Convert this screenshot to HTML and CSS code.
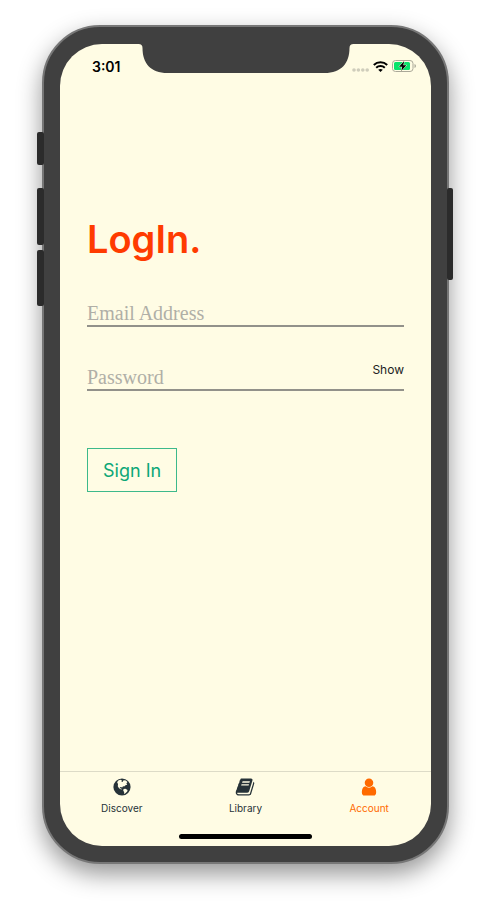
FILE: index.html
```html
<!DOCTYPE html>
<html lang="en">
<head>
<meta charset="utf-8">
<meta name="viewport" content="width=device-width, initial-scale=1">
<title>LogIn</title>
<link rel="stylesheet" href="styles.css">
</head>
<body>
<div class="phone">
  <span class="key key-mute"></span>
  <span class="key key-up"></span>
  <span class="key key-down"></span>
  <span class="key key-power"></span>
  <div class="screen">
    <svg class="notch" viewBox="0 0 219 30" aria-hidden="true"><path d="M0 0H219V1H217Q213 1 213 5C213 20 205 30 188 30H31C14 30 6 20 6 5Q6 1 2 1H0Z"/></svg>
    <header class="status">
      <time>3:01</time>
      <div class="indicators">
        <svg class="signal" viewBox="0 0 17 4" aria-hidden="true"><circle cx="2" cy="2" r="1.800"/><circle cx="6.400" cy="2" r="1.800"/><circle cx="10.800" cy="2" r="1.800"/><circle cx="15.200" cy="2" r="1.800"/></svg>
        <svg class="wifi" viewBox="0 0 15 11" aria-hidden="true"><path d="M.8 4A9.700 9.700 0 0 1 14.200 4M3.200 6.700A6.200 6.200 0 0 1 11.800 6.700"/><path class="fill" d="M7.500 11L5.200 8.800Q7.500 7.200 9.800 8.800Z"/></svg>
        <svg class="battery" viewBox="0 0 24 12" aria-hidden="true"><rect class="case" x=".5" y=".5" width="20.500" height="11" rx="3"/><path class="tip" d="M22.500 4Q24 4.600 24 6T22.500 8Z"/><rect class="charge" x="2" y="2" width="16" height="8" rx="1.500"/><path class="bolt" d="M12.200 1L7 6.700H10.200L9.200 11L14.400 5.300H11.300Z"/></svg>
      </div>
    </header>
    <main>
      <h1>LogIn.</h1>
      <form>
        <div class="field">
          <input type="email" aria-label="Email Address" placeholder="Email Address">
        </div>
        <div class="field">
          <input type="password" aria-label="Password" placeholder="Password">
          <button class="show" type="button">Show</button>
        </div>
        <button class="submit" type="submit">Sign In</button>
      </form>
    </main>
    <nav class="tabs">
      <a href="#discover">
        <svg viewBox="0 0 20 20" aria-hidden="true"><circle cx="10" cy="10" r="8.600"/><path class="land" d="M6.300 3.600L8.200 2.700L10 3.300L9.200 4.300L10.600 4.900L11.600 3.300L13.800 3.400L15.400 5L14.400 6.500L15.200 7.800L13.500 8.200L12.200 9.400L11 9.200L10.200 10.600L8.800 9.900L7.600 10.400L8.800 11.400L10 12L9.200 12.500L7 11.300L5.800 9.200L6 6.900L5.100 5.200ZM11.600 12L13.400 11.700L15.600 13L15.200 14.600L13.400 16.200L12 17L12.200 15.200L11.200 13.600Z"/></svg>
        <span>Discover</span>
      </a>
      <a href="#library">
        <svg viewBox="0 0 1792 1792" aria-hidden="true"><path d="M1703 478q40 57 18 129l-275 906q-19 64-76.500 107.500t-122.500 43.500h-923q-77 0-148.500-53.500t-99.500-131.500q-24-67-2-127 0-4 3-27t4-37q1-8-3-21.500t-3-19.500q2-11 8-21t16.500-23.500 16.500-23.500q23-38 45-91.500t30-91.500q3-10 .5-30t-.5-28q3-11 17-28t17-23q21-36 42-92t25-90q1-9-2.500-32t.5-28q4-13 22-30.500t22-22.500q19-26 42.500-84.500t27.500-96.500q1-8-3-25.500t-2-26.500q2-8 9-18t18-23 17-21q8-12 16.500-30.500t15-35 16-36 19.500-32 26.500-23.500 36-11.500 47.500 5.500l-1 3q38-9 51-9h761q74 0 114 56t18 130l-274 906q-36 119-71.500 153.500t-128.500 34.500h-869q-27 0-38 15-11 16-1 43 24 70 144 70h923q29 0 56-15.500t35-41.500l300-987q7-22 5-57 38 15 59 43zm-1064 2q-4 13 2 22.500t20 9.500h608q13 0 25.500-9.500t16.500-22.500l21-64q4-13-2-22.500t-20-9.500h-608q-13 0-25.500 9.500t-16.500 22.500zm-83 256q-4 13 2 22.500t20 9.500h608q13 0 25.500-9.500t16.500-22.500l21-64q4-13-2-22.500t-20-9.500h-608q-13 0-25.500 9.500t-16.500 22.500z"/></svg>
        <span>Library</span>
      </a>
      <a class="active" href="#account" aria-current="page">
        <svg viewBox="0 0 1792 1792" aria-hidden="true"><path d="M1536 1399q0 109-62.500 187t-150.500 78h-854q-88 0-150.500-78t-62.500-187q0-85 8.500-160.500t31.500-152 58.500-131 94-89 134.500-34.500q131 128 313 128t313-128q76 0 134.500 34.500t94 89 58.500 131 31.500 152 8.500 160.500zm-256-887q0 159-112.500 271.500t-271.500 112.500-271.500-112.500-112.500-271.500 112.500-271.500 271.500-112.500 271.500 112.500 112.500 271.500z"/></svg>
        <span>Account</span>
      </a>
    </nav>
    <div class="home"></div>
  </div>
</div>
</body>
</html>
```
FILE: styles.css
```css
* { box-sizing: border-box; }

body {
  margin: 0;
  min-height: 100vh;
  padding: 25px 42px 42px;
  display: flex;
  background: #fff;
  color: #000;
  font-family: Inter, "Liberation Sans", sans-serif;
}

.phone {
  position: relative;
  flex: 1;
  display: flex;
  padding: 17px 16px 16px;
  border: 2px solid #777;
  border-radius: 58px;
  background: #404040;
  box-shadow: 0 10px 24px rgba(0, 0, 0, .42);
}

.key {
  position: absolute;
  left: -7px;
  width: 7px;
  border-radius: 2px;
  background: #2b2b2b;
}
.key-mute { top: 105px; height: 33px; }
.key-up { top: 161px; height: 57px; }
.key-down { top: 223px; height: 56px; }
.key-power { top: 161px; height: 92px; left: auto; right: -6px; width: 6px; }

.screen {
  position: relative;
  flex: 1;
  display: flex;
  flex-direction: column;
  overflow: hidden;
  border-radius: 42px;
  background: #fffce4;
}

.notch {
  position: absolute;
  top: -1px;
  left: 50%;
  width: 219px;
  height: 30px;
  transform: translateX(-50%);
  fill: #404040;
}

.status {
  display: flex;
  justify-content: space-between;
  align-items: center;
  height: 44px;
  padding: 0 15px 0 32px;
}
.status time { font-size: 14px; font-weight: 600; }
.indicators { display: flex; align-items: center; gap: 4px; }
.signal { width: 17px; height: 4px; margin-top: 7px; fill: #cfcdbb; }
.wifi { width: 15px; height: 11px; fill: none; stroke: #000; stroke-width: 2; }
.wifi .fill { fill: #000; stroke: none; }
.battery { width: 24px; height: 12px; }
.case { fill: none; stroke: #aaa898; }
.tip { fill: #aaa898; }
.charge { fill: #07e36b; }
.bolt { fill: #000; stroke: #fffce4; stroke-width: 1; paint-order: stroke; }

main { flex: 1; padding: 127px 27px 40px; }

h1 {
  margin: 0;
  color: #ff3b00;
  font-size: 38px;
  font-weight: 600;
  line-height: 48px;
}

.field {
  display: flex;
  align-items: flex-end;
  height: 64px;
  border-bottom: 2px solid #92918a;
}
.field input {
  flex: 1;
  min-width: 0;
  height: 24px;
  padding: 0;
  border: 0;
  outline: 0;
  background: transparent;
  color: #263238;
  font: 20px/24px "Liberation Serif", serif;
}
.field input::placeholder { color: #b0afa7; opacity: 1; }

button { background: transparent; font-family: inherit; cursor: pointer; }
.show {
  padding: 0 0 10px;
  border: 0;
  color: #222;
  font-size: 12px;
  line-height: 18px;
}
.submit {
  height: 44px;
  margin-top: 57px;
  padding: 0 15px;
  border: 1px solid #3db98b;
  color: #0ba777;
  font-size: 18px;
}

.tabs {
  display: grid;
  grid-template-columns: repeat(3, 1fr);
  height: 63px;
  border-top: 1px solid #dddbc7;
}
.tabs a {
  display: flex;
  flex-direction: column;
  align-items: center;
  gap: 4px;
  padding-top: 5px;
  color: #263238;
  font-size: 10px;
  line-height: 14px;
  text-decoration: none;
}
.tabs a.active { color: #ff6a00; }
.tabs svg { width: 20px; height: 20px; fill: currentColor; }
.tabs .land { fill: #fffce4; }

.home {
  align-self: center;
  width: 36%;
  height: 5px;
  margin-bottom: 7px;
  border-radius: 3px;
  background: #000;
}
```
